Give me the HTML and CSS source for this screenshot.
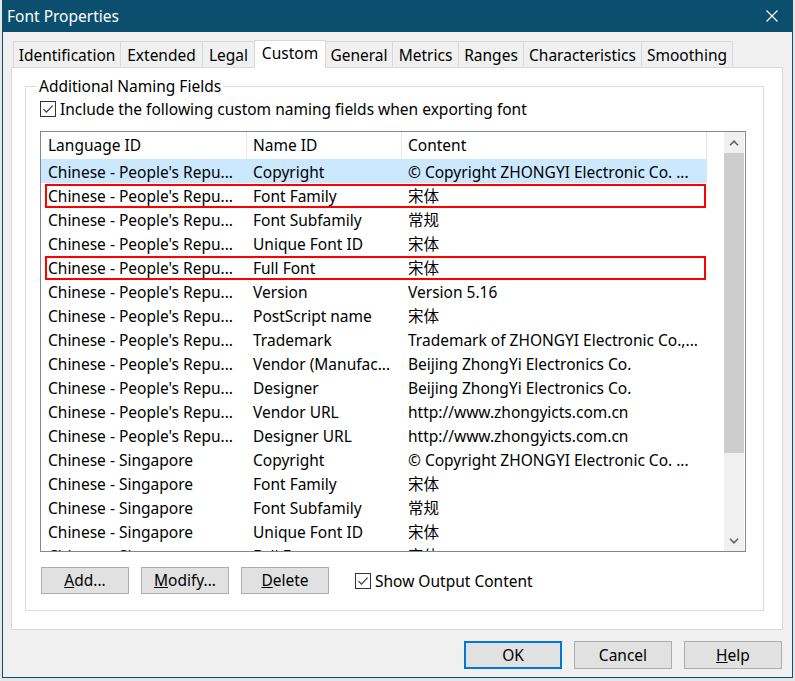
FILE: index.html
```html
<!DOCTYPE html>
<html lang="en">
<head>
<meta charset="utf-8">
<title>Font Properties</title>
<link rel="stylesheet" href="styles.css">
</head>
<body>
<div class="window">
  <div class="titlebar">
    <span class="title">Font Properties</span>
    <svg class="close" width="12" height="12" viewBox="0 0 12 12"><path d="M0.5 0.5 L11.5 11.5 M11.5 0.5 L0.5 11.5" stroke="#fff" stroke-width="1.2" fill="none"/></svg>
  </div>
  <div class="client">
    <div class="tabs">
      <div class="tab w-ident">Identification</div>
      <div class="tab w-ext">Extended</div>
      <div class="tab w-legal">Legal</div>
      <div class="tab active w-custom">Custom</div>
      <div class="tab after-active w-general">General</div>
      <div class="tab w-metrics">Metrics</div>
      <div class="tab w-ranges">Ranges</div>
      <div class="tab w-char">Characteristics</div>
      <div class="tab last w-smooth">Smoothing</div>
    </div>
    <div class="panel">
      <div class="group">
        <div class="group-title">Additional Naming Fields</div>
        <div class="check-row">
          <svg class="checkbox" width="16" height="16" viewBox="0 0 16 16"><rect x="0.5" y="0.5" width="15" height="15" fill="#fff" stroke="#333"/><path d="M3.5 8.2 L6.5 11.2 L12.6 4.6" stroke="#333" stroke-width="1.1" fill="none"/></svg>
          <span>Include the following custom naming fields when exporting font</span>
        </div>
        <div class="list">
          <div class="list-main">
            <div class="list-head">
              <div class="hcell c1">Language ID</div>
              <div class="hcell c2">Name ID</div>
              <div class="hcell c3">Content</div>
            </div>
            <div class="list-body">
              <div class="row selected"><div class="cell c1">Chinese - People's Repu...</div><div class="cell c2">Copyright</div><div class="cell c3">© Copyright ZHONGYI Electronic Co. ...</div></div>
              <div class="row marked"><div class="cell c1">Chinese - People's Repu...</div><div class="cell c2">Font Family</div><div class="cell c3">宋体</div></div>
              <div class="row"><div class="cell c1">Chinese - People's Repu...</div><div class="cell c2">Font Subfamily</div><div class="cell c3">常规</div></div>
              <div class="row"><div class="cell c1">Chinese - People's Repu...</div><div class="cell c2">Unique Font ID</div><div class="cell c3">宋体</div></div>
              <div class="row marked"><div class="cell c1">Chinese - People's Repu...</div><div class="cell c2">Full Font</div><div class="cell c3">宋体</div></div>
              <div class="row"><div class="cell c1">Chinese - People's Repu...</div><div class="cell c2">Version</div><div class="cell c3">Version 5.16</div></div>
              <div class="row"><div class="cell c1">Chinese - People's Repu...</div><div class="cell c2">PostScript name</div><div class="cell c3">宋体</div></div>
              <div class="row"><div class="cell c1">Chinese - People's Repu...</div><div class="cell c2">Trademark</div><div class="cell c3">Trademark of ZHONGYI Electronic Co.,...</div></div>
              <div class="row"><div class="cell c1">Chinese - People's Repu...</div><div class="cell c2">Vendor (Manufac...</div><div class="cell c3">Beijing ZhongYi Electronics Co.</div></div>
              <div class="row"><div class="cell c1">Chinese - People's Repu...</div><div class="cell c2">Designer</div><div class="cell c3">Beijing ZhongYi Electronics Co.</div></div>
              <div class="row"><div class="cell c1">Chinese - People's Repu...</div><div class="cell c2">Vendor URL</div><div class="cell c3">http://www.zhongyicts.com.cn</div></div>
              <div class="row"><div class="cell c1">Chinese - People's Repu...</div><div class="cell c2">Designer URL</div><div class="cell c3">http://www.zhongyicts.com.cn</div></div>
              <div class="row"><div class="cell c1">Chinese - Singapore</div><div class="cell c2">Copyright</div><div class="cell c3">© Copyright ZHONGYI Electronic Co. ...</div></div>
              <div class="row"><div class="cell c1">Chinese - Singapore</div><div class="cell c2">Font Family</div><div class="cell c3">宋体</div></div>
              <div class="row"><div class="cell c1">Chinese - Singapore</div><div class="cell c2">Font Subfamily</div><div class="cell c3">常规</div></div>
              <div class="row"><div class="cell c1">Chinese - Singapore</div><div class="cell c2">Unique Font ID</div><div class="cell c3">宋体</div></div>
              <div class="row"><div class="cell c1">Chinese - Singapore</div><div class="cell c2">Full Font</div><div class="cell c3">宋体</div></div>
            </div>
          </div>
          <div class="scrollbar">
            <div class="sb-btn"><svg width="10" height="6" viewBox="0 0 10 6"><path d="M1 5.2 L5 1.2 L9 5.2" stroke="#606060" stroke-width="1.6" fill="none"/></svg></div>
            <div class="sb-thumb"></div>
            <div class="sb-track"></div>
            <div class="sb-btn"><svg width="10" height="6" viewBox="0 0 10 6"><path d="M1 0.8 L5 4.8 L9 0.8" stroke="#606060" stroke-width="1.6" fill="none"/></svg></div>
          </div>
        </div>
        <div class="actions">
          <button class="btn"><u>A</u>dd...</button>
          <button class="btn"><u>M</u>odify...</button>
          <button class="btn"><u>D</u>elete</button>
          <div class="check-row show">
            <svg class="checkbox" width="16" height="16" viewBox="0 0 16 16"><rect x="0.5" y="0.5" width="15" height="15" fill="#fff" stroke="#333"/><path d="M3.5 8.2 L6.5 11.2 L12.6 4.6" stroke="#333" stroke-width="1.1" fill="none"/></svg>
            <span>Show Output Content</span>
          </div>
        </div>
      </div>
    </div>
    <div class="footer">
      <button class="fbtn default">OK</button>
      <button class="fbtn">Cancel</button>
      <button class="fbtn"><u>H</u>elp</button>
    </div>
  </div>
</div>
</body>
</html>
```
FILE: styles.css
```css
html, body {
  margin: 0;
  padding: 0;
}
body {
  background: #e6e6e6;
  font-family: "Noto Sans", "Noto Sans CJK SC", sans-serif;
  font-size: 15.5px;
  color: #000;
}
.window {
  margin-left: 2px;
  width: 791px;
  height: 678px;
  box-sizing: border-box;
  border: 1px solid #0b4e6e;
  border-top: none;
  background: #f0f0f0;
  display: flex;
  flex-direction: column;
}
.titlebar {
  height: 32px;
  flex: none;
  background: #0b4e6e;
  color: #fff;
  display: flex;
  align-items: center;
  justify-content: space-between;
  padding: 0 14px 0 4px;
}
.title {
  font-size: 15.5px;
  line-height: 20px;
}
.client {
  flex: 1;
  display: flex;
  flex-direction: column;
  padding: 8px 9px 0 8px;
}
.tabs {
  display: flex;
  align-items: flex-end;
  height: 27px;
  padding-left: 2px;
  position: relative;
  z-index: 1;
}
.tab {
  box-sizing: border-box;
  height: 26px;
  line-height: 26px;
  border: 1px solid #d9d9d9;
  border-bottom: none;
  border-right: none;
  background: #f0f0f0;
  text-align: center;
  white-space: nowrap;
}
.tab.active {
  height: 28px;
  margin-bottom: -1px;
  background: #fff;
  border-right: 1px solid #d9d9d9;
  line-height: 25px;
}
.tab.after-active { border-left: none; }
.tab.last { border-right: 1px solid #d9d9d9; }
.w-ident { width: 107px; }
.w-ext { width: 82px; }
.w-legal { width: 52px; }
.w-custom { width: 72px; }
.w-general { width: 66px; }
.w-metrics { width: 66px; }
.w-ranges { width: 65px; }
.w-char { width: 118px; }
.w-smooth { width: 92px; }

.panel {
  height: 563px;
  box-sizing: border-box;
  border: 1px solid #d9d9d9;
  background: #fff;
  padding: 18px 18px 18px 13px;
}
.group {
  height: 100%;
  box-sizing: border-box;
  border: 1px solid #dcdcdc;
  padding: 0 17px 0 14px;
}
.group-title {
  margin: -11px 0 0 -3px;
  padding: 0 2px;
  width: max-content;
  background: #fff;
  line-height: 20px;
}
.check-row {
  display: flex;
  align-items: center;
  gap: 4px;
  height: 20px;
  margin-top: 3px;
  white-space: nowrap;
}
.checkbox { flex: none; }
.list {
  margin-top: 12px;
  height: 421px;
  box-sizing: border-box;
  border: 1px solid #828790;
  display: flex;
  background: #fff;
}
.list-main {
  flex: 1;
  overflow: hidden;
}
.list-head {
  display: flex;
  height: 27px;
  line-height: 27px;
}
.hcell {
  box-sizing: border-box;
  border-right: 1px solid #e5e5e5;
  white-space: nowrap;
  overflow: hidden;
}
.list-body {
  height: 392px;
  overflow: hidden;
}
.row {
  display: flex;
  width: 666px;
  height: 24px;
  line-height: 24px;
  position: relative;
}
.row.selected { background: #cce8ff; }
.row.marked::after {
  content: "";
  position: absolute;
  left: 4px;
  right: 1px;
  top: 1px;
  bottom: -1px;
  border: 2px solid #f00;
}
.cell {
  box-sizing: border-box;
  white-space: nowrap;
  overflow: hidden;
  padding-top: 1px;
}
.c1 { width: 206px; padding-left: 7px; }
.c2 { width: 155px; padding-left: 6px; }
.c3 { width: 305px; padding-left: 6px; }

.scrollbar {
  width: 20px;
  margin-right: 1px;
  background: #f0f0f0;
  display: flex;
  flex-direction: column;
}
.sb-btn {
  height: 21px;
  display: flex;
  align-items: center;
  justify-content: center;
}
.sb-thumb {
  height: 300px;
  background: #cdcdcd;
}
.sb-track { flex: 1; }

.actions {
  display: flex;
  align-items: center;
  gap: 12px;
  margin-top: 15px;
  padding-left: 1px;
}
.btn {
  width: 88px;
  height: 27px;
  box-sizing: border-box;
  border: 1px solid #adadad;
  background: #e1e1e1;
  font: inherit;
  color: #000;
  padding: 0;
  line-height: 25px;
  text-align: center;
}
.check-row.show {
  margin: 0 0 0 14px;
}
.footer {
  display: flex;
  justify-content: flex-end;
  gap: 12px;
  padding: 11px 1px 0 0;
}
.fbtn {
  width: 98px;
  height: 28px;
  box-sizing: border-box;
  border: 1px solid #adadad;
  background: #e1e1e1;
  font: inherit;
  color: #000;
  padding: 0;
  text-align: center;
}
.fbtn.default {
  border: 2px solid #0078d7;
}
```
